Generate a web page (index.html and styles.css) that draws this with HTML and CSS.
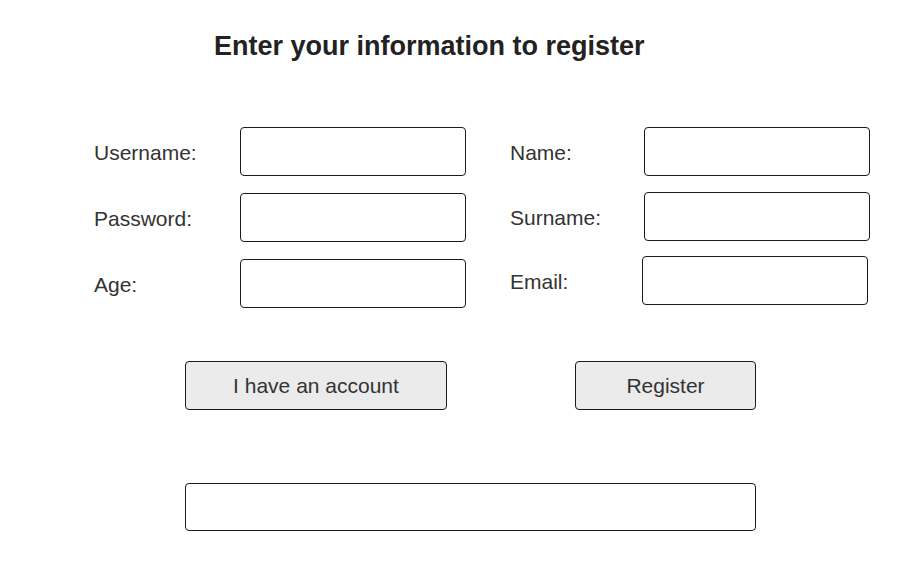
FILE: index.html
```html
<!DOCTYPE html>
<html lang="en">
<head>
<meta charset="utf-8">
<title>Register</title>
<link rel="stylesheet" href="styles.css">
</head>
<body>
<main class="page">
  <h1 class="title">Enter your information to register</h1>
  <div class="fields">
    <div class="col col-left">
      <div class="field"><label class="label" for="username">Username:</label><input class="input" id="username" type="text"></div>
      <div class="field"><label class="label" for="password">Password:</label><input class="input" id="password" type="password"></div>
      <div class="field"><label class="label" for="age">Age:</label><input class="input" id="age" type="text"></div>
    </div>
    <div class="col col-right">
      <div class="field field-first"><label class="label" for="name">Name:</label><input class="input" id="name" type="text"></div>
      <div class="field"><label class="label" for="surname">Surname:</label><input class="input" id="surname" type="text"></div>
      <div class="field"><label class="label" for="email">Email:</label><input class="input input-shift" id="email" type="text"></div>
    </div>
  </div>
  <div class="actions">
    <button class="btn btn-account" type="button">I have an account</button>
    <button class="btn btn-register" type="button">Register</button>
  </div>
  <div class="message"></div>
</main>
</body>
</html>
```
FILE: styles.css
```css
html, body {
  margin: 0;
  padding: 0;
  background: #ffffff;
}

body {
  font-family: "Liberation Sans", Arial, sans-serif;
  color: #333333;
}

.page {
  width: 908px;
  height: 576px;
  overflow: hidden;
}

.title {
  margin: 30px 0 0 214px;
  font-size: 27px;
  line-height: 32px;
  font-weight: bold;
  color: #222222;
}

.fields {
  display: flex;
  margin: 65px 0 0 94px;
  gap: 44px;
}

.col {
  display: flex;
  flex-direction: column;
}

.col-left {
  gap: 18px;
}

.col-right {
  gap: 16px;
}

.field-first {
  margin-bottom: 1px;
}

.field {
  display: flex;
  align-items: center;
  height: 48px;
}

.label {
  padding-top: 4px;
  font-size: 21px;
  line-height: 48px;
  color: #333333;
}

.col-left .label {
  width: 146px;
}

.col-right .label {
  width: 134px;
}

.input {
  box-sizing: border-box;
  width: 226px;
  height: 49px;
  margin: 0;
  padding: 0 10px;
  border: 1.5px solid #1a1a1a;
  border-radius: 4px;
  background: #ffffff;
  font: 21px "Liberation Sans", Arial, sans-serif;
  outline: none;
}

.input-shift {
  margin-left: -2px;
}

.actions {
  display: flex;
  gap: 128px;
  margin: 54px 0 0 185px;
}

.btn {
  box-sizing: border-box;
  height: 49px;
  margin: 0;
  padding: 0;
  border: 1.5px solid #1a1a1a;
  border-radius: 4px;
  background: #ebebeb;
  color: #333333;
  font: 21px "Liberation Sans", Arial, sans-serif;
}

.btn-account {
  width: 262px;
}

.btn-register {
  width: 181px;
}

.message {
  box-sizing: border-box;
  width: 571px;
  height: 48px;
  margin: 73px 0 0 185px;
  border: 1.5px solid #1a1a1a;
  border-radius: 4px;
  background: #ffffff;
}
```
